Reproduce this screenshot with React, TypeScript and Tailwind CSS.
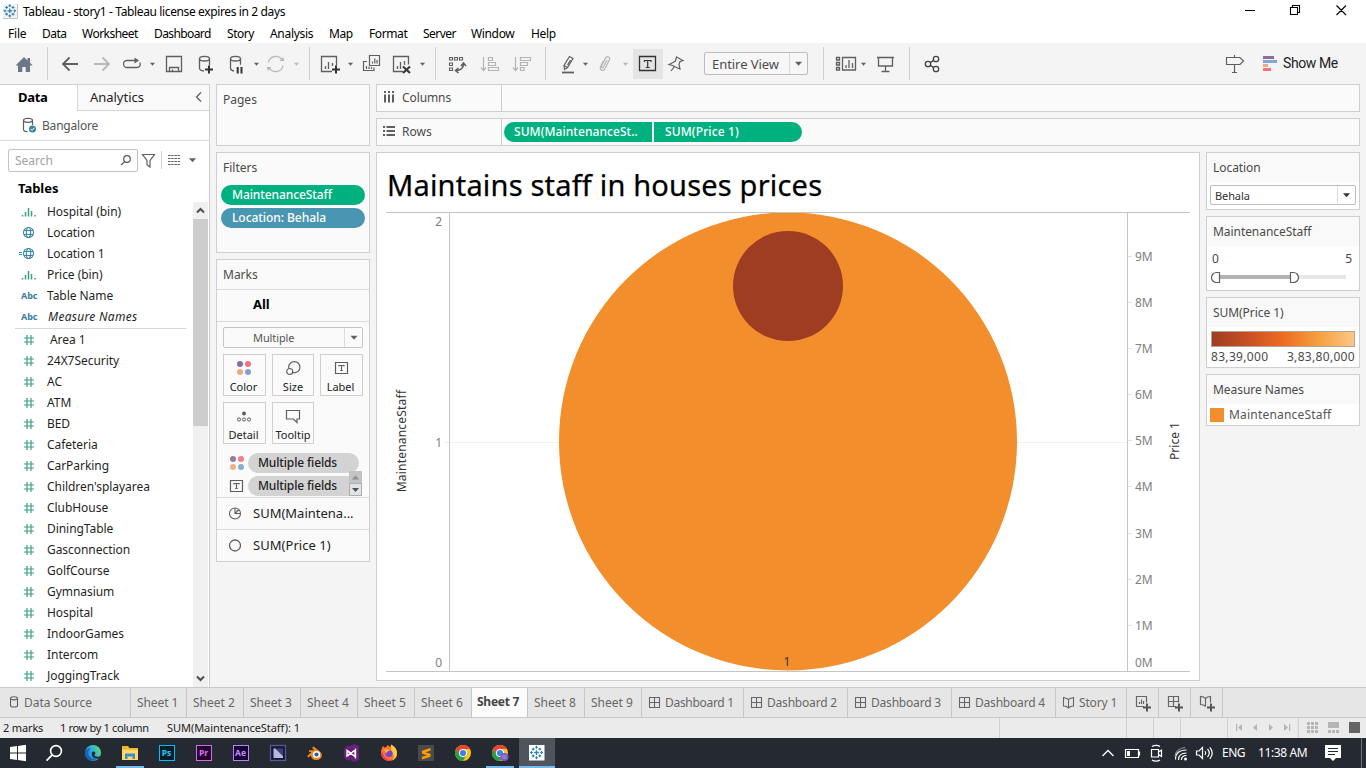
import React from "react";

type IcProps = {
  x: number;
  y?: number;
  w: number;
  h?: number;
  c?: string;
  children?: React.ReactNode;
};

/* Icon whose drawing uses window coordinates; x/y is the corner of its slot. */
function Ic({ x, y = 43, w, h = 41, c = "#5f5f5f", children }: IcProps) {
  return (
    <svg className="block shrink-0" width={w} height={h} viewBox={`${x} ${y} ${w} ${h}`} fill="none" stroke={c} strokeWidth={1.3}>
      {children}
    </svg>
  );
}

function Caret({ x, y, c = "#5f5f5f", s = 2.5 }: { x: number; y: number; c?: string; s?: number }) {
  return <path d={`M${x - s} ${y - s / 2}h${s * 2}l${-s} ${s + 0.5}z`} fill={c} stroke="none" />;
}

function Divider() {
  return <div className="my-1 w-px shrink-0 self-stretch bg-[#d0d0d0]" />;
}

function TableauMark({ cx, cy, s = 1 }: { cx: number; cy: number; s?: number }) {
  return (
    <g transform={`translate(${cx} ${cy}) scale(${s})`} stroke="#2f7fb0" strokeWidth={1.2}>
      <path d="M-2.5 0h5M0 -2.5v5" strokeWidth={1.4} />
      <path d="M-1.5 -5.5h3M0 -7v3M-1.5 5.5h3M0 4v3M-6.8 0h3M-5.3 -1.5v3M3.8 0h3M5.3 -1.5v3" />
      <path d="M-5 -3.6h3M-3.5 -5.1v3M2 -3.6h3M3.5 -5.1v3M-5 3.6h3M-3.5 2.1v3M2 3.6h3M3.5 2.1v3" />
    </g>
  );
}

function TitleBar() {
  return (
    <div className="flex h-6 items-center justify-between bg-white">
      <div className="flex items-center">
        <Ic x={0} y={0} w={22} h={24}>
          <path d="M3 18.500h14.500V4" stroke="#c4c4c4" strokeWidth={1} />
          <rect x="3" y="4" width="14" height="14" fill="#f3f3f3" stroke="none" />
          <TableauMark cx={9.8} cy={10.8} s={0.92} />
        </Ic>
        <span className="ml-px text-[12px] tracking-[-0.37px] text-black">Tableau - story1 - Tableau license expires in 2 days</span>
      </div>
      <Ic x={1230} y={0} w={136} h={24} c="#000">
        <path d="M1245 10.500h10M1290.500 7.500h7v7h-7zM1292.500 7.500v-2h7v7h-2M1336.500 5.500l9.500 9.500M1346 5.500l-9.500 9.500" strokeWidth={1.1} />
      </Ic>
    </div>
  );
}

function MenuBar() {
  return (
    <div className="flex h-[19px] items-center bg-white pl-2 text-[12px] leading-[19px] text-black">
      <span className="w-[34px] tracking-[-0.2px]">File</span>
      <span className="w-10 tracking-[-0.5px]">Data</span>
      <span className="w-[72px] tracking-[-0.52px]">Worksheet</span>
      <span className="w-[73px] tracking-[-0.6px]">Dashboard</span>
      <span className="w-[43px] tracking-[-0.45px]">Story</span>
      <span className="w-[59px] tracking-[-0.3px]">Analysis</span>
      <span className="w-10 tracking-[-0.4px]">Map</span>
      <span className="w-[54px] tracking-[-0.4px]">Format</span>
      <span className="w-12 tracking-[-0.55px]">Server</span>
      <span className="w-[60px] tracking-[-0.35px]">Window</span>
      <span className="tracking-[-0.3px]">Help</span>
    </div>
  );
}

function Toolbar() {
  return (
    <div className="flex h-[41px] shrink-0 items-center bg-[#f4f4f4]">
      <Ic x={0} w={47}>
        <path d="M15.500 65.500L24 57l3.500 3.400V58h2.500v4.800l2.700 2.700H30V72h-4.300v-5h-3.400v5H18v-6.500z" fill="#6b7785" stroke="none" />
      </Ic>
      <Divider />
      <Ic x={48} w={111}>
        <path d="M78 64H63M69.500 57.500L63 64l6.500 6.500" strokeWidth={1.8} />
        <path d="M94 64h15M102.500 57.500L109 64l-6.500 6.500" stroke="#b9b9b9" strokeWidth={1.8} />
        <path d="M131 60.500h-4a3.500 3.500 0 0 0 0 7h10a3.300 3.300 0 0 0 2.800-5M127 60.500h9" />
        <path d="M134.500 57.500l4.500 3-4.500 3z" fill="#5f5f5f" stroke="none" />
        <Caret x={152.500} y={64} />
      </Ic>
      <Ic x={159} w={61}>
        <path d="M166.500 56.500h15v15h-15zM169.500 71.500v-4h9v4M172.500 71v-1.500" />
        <path d="M199.500 58.800v9.500c0 1.500 1.500 2.500 4.500 2.700M209.500 58.800v6.500" />
        <ellipse cx="204.500" cy="58.700" rx="5" ry="2.300" />
        <path d="M209 65.500v8M205 69.500h8" stroke="#333" strokeWidth={2} />
      </Ic>
      <Ic x={220} w={89}>
        <path d="M230.500 58.800v9.500c0 1.500 1 2.300 3.500 2.700M240.500 58.800v6" />
        <ellipse cx="235.500" cy="58.700" rx="5" ry="2.300" />
        <path d="M237.700 67v6.500M241.500 67v6.500" stroke="#333" strokeWidth={2} />
        <Caret x={256.500} y={64} />
        <g stroke="#b9b9b9">
          <path d="M268.500 62.500a7.300 7.300 0 0 1 13.500-2.500M283 65.500a7.300 7.300 0 0 1-13.500 2.500" />
          <path d="M279.500 61h5l-1.500-4zM266.500 67h5l-3.500 4z" fill="#b9b9b9" stroke="none" />
        </g>
        <Caret x={296.500} y={64} c="#b9b9b9" />
      </Ic>
      <Divider />
      <Ic x={310} w={125}>
        <path d="M332 71.500h-10.500v-15h15v9M325.500 69v-3M328.500 69v-7M332.500 66v-3" />
        <path d="M336 65.500v8M332 69.500h8" stroke="#333" strokeWidth={2} />
        <Caret x={350.500} y={64} />
        <path d="M369.500 55.500h10v10h-10zM372.500 63.500v-2M374.800 63.500v-5M377 63.500v-3.500" strokeWidth={1.2} />
        <path d="M367 61.500h-3.500v9h10.500v-3M366.500 69v-3M369 69v-2.500M371.500 69v-2" strokeWidth={1.2} />
        <path d="M403 71.500h-9.500v-15h15v8M397.500 69v-3M400.500 69v-7M404.500 65v-4" />
        <path d="M403 66.500l7 6.500M410 66.500l-7 6.500" stroke="#333" strokeWidth={2} />
        <Caret x={422.500} y={64} />
      </Ic>
      <Divider />
      <Ic x={436} w={109}>
        <path d="M449.500 57.500h3v2.500h-3zM454.500 57.500h3v2.500h-3zM459.500 57.500h3v2.500h-3zM449.500 63h3v2.500h-3zM449.500 68h3v2.500h-3z" strokeWidth={1.1} />
        <path d="M463.500 64c0 4-3 6.500-7 6.500M461 66l2.500-3 2.500 3M458.500 68l-3 2.500 3 2.500" strokeWidth={1.6} />
        <g stroke="#b4b4b4" strokeWidth={1.200}>
          <path d="M483.500 57v13M481 67.500l2.500 3 2.500-3M488.500 57.500h4v3h-4zM488.500 62.500h7v3h-7zM488.500 67.500h10v3h-10z" />
          <path d="M515.500 57v13M513 67.500l2.500 3 2.500-3M520.500 57.500h10v3h-10zM520.500 62.500h7v3h-7zM520.500 67.500h3.500v3h-3.500z" />
        </g>
      </Ic>
      <Divider />
      <Ic x={546} w={87}>
        <path d="M564.500 69.500l-.5-4 5.500-9 3.500 2-5.500 9zM564 65.500l3.500 2M570.500 60l-3 5" strokeWidth={1.200} />
        <path d="M562 72.500h12" strokeWidth={1.800} />
        <Caret x={585.500} y={64} />
        <path d="M607 60l-3.500 7c-.9 1.600-2.600.8-2-.8l4-8.200c1.200-2.200 5-.8 4 1.600l-4.500 9.200c-1.500 3-6 1.300-4.500-2l3-6" stroke="#b4b4b4" strokeWidth={1.200} />
        <Caret x={625.500} y={64} c="#b4b4b4" />
      </Ic>
      <div className="h-[30px] bg-[#e4e4e4]">
        <Ic x={633} y={49} w={30} h={30} c="#333">
          <path d="M639.500 56.500h16v14h-16z" />
          <path d="M644.500 62v-1.500h6.500v1.500M647.700 60.500v7M645.700 67.500h4" strokeWidth={1.200} />
        </Ic>
      </div>
      <Ic x={663} w={41}>
        <path d="M676.500 57l6.500 3.500-3 1-1 3 1 4.500-3.500-1.500-4-2-3.500-1 4-2 2.500-1.500zM674.500 66.500l-3.500 4.500" strokeWidth={1.200} />
      </Ic>
      <div className="flex h-[23px] w-[104px] items-center rounded-[2px] border border-[#bcbcbc] bg-[#f7f7f7]">
        <span className="flex-1 pl-[7px] text-[13px] leading-5 tracking-[-0.05px] text-[#4c4c4c]">Entire View</span>
        <div className="h-[21px] border-l border-[#d8d8d8]">
          <Ic x={790} y={53} w={17} h={21}>
            <Caret x={798.500} y={63.500} s={3.5} />
          </Ic>
        </div>
      </div>
      <div className="w-[15px]" />
      <Divider />
      <Ic x={824} w={85}>
        <path d="M836.500 57.500h3v2.500h-3zM836.500 62.500h3v2.500h-3zM836.500 67.500h3v2.500h-3zM842.500 57.500h13v12.500h-13zM846 68v-3M849 68v-8M852.500 68v-5" />
        <Caret x={863.500} y={64} />
        <path d="M877 57.500h17M878.500 57.500v8.500h14v-8.500M885.500 66v5M881.500 71.500h8" />
      </Ic>
      <Divider />
      <Ic x={910} w={310} c="#444">
        <circle cx="928" cy="64" r="2.700" />
        <circle cx="936" cy="59" r="2.700" />
        <circle cx="936" cy="69" r="2.700" />
        <path d="M930.300 62.600l3.400-2.200M930.300 65.400l3.400 2.200" />
      </Ic>
      <Ic x={1220} w={62}>
        <path d="M1226.500 57.500h13.500l3.500 3.500-3.500 3.500h-13.500zM1234.500 55v2.500M1234.500 64.500v8M1232 72.500h5" strokeWidth={1.200} />
        <g stroke="none">
          <rect x="1263" y="56" width="11" height="3" fill="#876f99" />
          <rect x="1263" y="60" width="14" height="3" fill="#84a5cd" />
          <rect x="1263" y="64" width="5" height="3" fill="#f1a77c" />
          <rect x="1263" y="68" width="8" height="3" fill="#fa6e7c" />
        </g>
      </Ic>
      <span className="ml-px font-[Roboto] text-[14px] tracking-[-0.4px] text-[#222]">Show Me</span>
    </div>
  );
}

type FieldKind = "bin" | "geo" | "geo=" | "abc" | "num";

function FieldIcon({ kind }: { kind: FieldKind }) {
  if (kind === "abc") {
    return <span className="w-[30px] pl-[3px] text-[9px] font-bold tracking-[-0.1px] text-[#3a7ca0]">Abc</span>;
  }
  return (
    <Ic x={0} y={0} w={30} h={21} c={kind === "num" || kind === "bin" ? "#3f9e80" : "#3a87a5"}>
      {kind === "num" && <path d="M9 6v10M13 6v10M6 9h10M6 13h10" strokeWidth={1.200} />}
      {kind === "bin" && <path d="M4.500 14v1.500M7.500 11v4.500M10.500 7v8.500M13.500 10v5.500M17 14v1.500" strokeWidth={1.500} />}
      {(kind === "geo" || kind === "geo=") && (
        <g strokeWidth={1.100}>
          <circle cx="10.500" cy="10.500" r="5" />
          <ellipse cx="10.500" cy="10.500" rx="2.200" ry="5" />
          <path d="M6 8.500h9M6 12.500h9" />
          {kind === "geo=" && <path d="M1 9.500h3M1 11.500h3" />}
        </g>
      )}
    </Ic>
  );
}

function Field({ kind, name, italic, indent }: { kind: FieldKind; name: string; italic?: boolean; indent?: boolean }) {
  return (
    <div className="flex h-[21px] items-center pl-[18px] text-[12px] leading-[21px] text-[#1f1f1f]">
      <FieldIcon kind={kind} />
      <span className={italic ? "italic tracking-[0.3px]" : indent ? "ml-[2px] tracking-[-0.05px]" : "-ml-px tracking-[-0.05px]"}>{name}</span>
    </div>
  );
}

const measures = [
  "24X7Security", "AC", "ATM", "BED", "Cafeteria", "CarParking", "Children'splayarea", "ClubHouse", "DiningTable",
  "Gasconnection", "GolfCourse", "Gymnasium", "Hospital", "IndoorGames", "Intercom", "JoggingTrack",
];

function DataPane() {
  return (
    <div className="flex w-[210px] shrink-0 flex-col border-t border-r border-[#cfcfcf] bg-white">
      <div className="flex h-[26px] shrink-0">
        <div className="w-[77px] pl-[18px] text-[13px] leading-[25px] font-bold tracking-[-0.3px] text-black">Data</div>
        <div className="flex flex-1 justify-between border-b border-l border-[#d4d4d4] bg-[#f9f9f9] pl-3">
          <span className="text-[13px] leading-[25px] tracking-[-0.03px] text-[#222]">Analytics</span>
          <Ic x={190} y={85} w={19} h={25}>
            <path d="M201 92.500l-4.500 4.500 4.500 4.500" strokeWidth={1.300} />
          </Ic>
        </div>
      </div>
      <div className="flex h-[30px] shrink-0 items-center border-b border-[#dcdcdc]">
        <Ic x={0} y={111} w={42} h={29}>
          <path d="M23.500 120.500v9c0 1.200 1.500 2 4 2.200M32.500 120.500v4.500" strokeWidth={1.200} />
          <ellipse cx="28" cy="120.300" rx="4.500" ry="2" strokeWidth={1.200} />
          <circle cx="32.500" cy="129" r="3.500" fill="#3a87a5" stroke="none" />
          <path d="M30.800 129l1.300 1.300 2.200-2.500" stroke="#fff" strokeWidth={1} />
        </Ic>
        <span className="text-[12px] leading-[28px] tracking-[-0.2px] text-[#555]">Bangalore</span>
      </div>
      <div className="flex h-[39px] shrink-0 items-center pl-2">
        <div className="flex h-[23px] w-[130px] items-center justify-between rounded-[2px] border border-[#c4c4c4]">
          <span className="pl-1.5 text-[12px] text-[#a2a2a2]">Search</span>
          <Ic x={117} y={150} w={20} h={21} c="#555">
            <circle cx="127" cy="159" r="3.300" strokeWidth={1.200} />
            <path d="M124.600 161.600l-3.500 3.500" />
          </Ic>
        </div>
        <Ic x={138} y={141} w={71} h={39}>
          <path d="M142.500 154.500h12l-4.500 6v6.500l-3-2.200v-4.300z" strokeWidth={1.200} />
          <path d="M161.500 151v18" stroke="#d0d0d0" strokeWidth={1} />
          <path d="M168 155.500h12M168 158.500h12M168 161.500h12M168 164.500h12" strokeDasharray="2.500 0.700" strokeWidth={1.200} />
          <Caret x={192.500} y={160} s={3.5} />
        </Ic>
      </div>
      <div className="h-[21px] shrink-0 pl-[18px] text-[13px] leading-[16px] font-bold tracking-[-0.03px] text-black">Tables</div>
      <div className="flex min-h-0 flex-1 overflow-hidden">
        <div className="w-[193px] overflow-hidden">
          <Field kind="bin" name="Hospital (bin)" />
          <Field kind="geo" name="Location" />
          <Field kind="geo=" name="Location 1" />
          <Field kind="bin" name="Price (bin)" />
          <Field kind="abc" name="Table Name" />
          <Field kind="abc" name="Measure Names" italic />
          <div className="mt-px mr-[7px] ml-[15px] h-px bg-[#d6d6d6]" />
          <Field kind="num" name="Area 1" indent />
          {measures.map((m) => (
            <Field key={m} kind="num" name={m} />
          ))}
        </div>
        <div className="mt-px flex w-[15px] flex-col bg-[#f0f0f0]">
          <Ic x={0} y={0} w={15} h={17} c="#4d4d4d">
            <path d="M4 10.500l3.500-3.500 3.500 3.500" strokeWidth={2} />
          </Ic>
          <div className="h-[207px] bg-[#cdcdcd]" />
          <div className="flex-1" />
          <Ic x={0} y={0} w={15} h={17} c="#4d4d4d">
            <path d="M4 6.500l3.500 3.500 3.500-3.500" strokeWidth={2} />
          </Ic>
        </div>
      </div>
    </div>
  );
}

function ColorDots({ small }: { small?: boolean }) {
  return (
    <svg width="16" height="16" viewBox="0 0 16 16" className={small ? "opacity-90" : ""}>
      <circle cx="4" cy="4" r="3" fill="#876f99" />
      <circle cx="12" cy="4" r="3" fill="#fa6e7c" />
      <circle cx="4" cy="12" r="3" fill="#f1a77c" />
      <circle cx="12" cy="12" r="3" fill="#7fa3cd" />
    </svg>
  );
}

function LabelIcon() {
  return (
    <svg width="16" height="16" viewBox="0 0 16 16" fill="none" stroke="#5f5f5f" strokeWidth={1.200}>
      <path d="M2.500 2.500h12v11h-12zM6 6.500v-1h5v1M8.500 5.500v5M7.200 10.500h2.600" />
    </svg>
  );
}

function MarkButton({ label, shift, children }: { label: string; shift?: boolean; children: React.ReactNode }) {
  return (
    <div className={`flex h-[42px] flex-col items-center border border-[#cfcfcf] bg-[#fbfbfb] pt-[5px] ${shift ? "pr-0.5" : ""}`}>
      <div className="h-4">{children}</div>
      <span className="mt-[3px] text-[11px] leading-[15px] whitespace-nowrap text-[#222]">{label}</span>
    </div>
  );
}

function Shelves() {
  return (
    <div className="ml-1.5 flex w-[154px] shrink-0 flex-col gap-1.5 text-[12px]">
      <div className="h-[62px] border border-[#cfcfcf] bg-[#fafafa] pt-[6px] pl-1.5 leading-[18px] text-[#4a4a4a]">Pages</div>
      <div className="h-[101px] border border-[#cfcfcf] bg-[#fafafa] px-1">
        <div className="pt-[6px] pl-0.5 leading-[18px] text-[#4a4a4a]">Filters</div>
        <div className="mt-2 h-5 rounded-full bg-[#00b180] pl-[11px] leading-5 font-medium text-white tracking-[-0.1px]">MaintenanceStaff</div>
        <div className="mt-[3px] h-5 rounded-full bg-[#4996b2] pl-[11px] leading-5 font-medium text-white tracking-[-0.05px]">Location: Behala</div>
      </div>
      <div className="h-[303px] border border-[#cfcfcf] bg-[#fafafa]">
        <div className="h-[29px] pl-1.5 leading-[29px] text-[#4a4a4a]">Marks</div>
        <div className="h-[33px] border-y border-[#dadada] pl-9 text-[13px] leading-[29px] font-bold text-black">All</div>
        <div className="h-[175px] px-1.5 pt-[5px]">
          <div className="flex h-[21px] rounded-[2px] border border-[#c6c6c6]">
            <div className="flex-1 pl-[29px] text-[11px] leading-[20px] tracking-[-0.1px] text-[#555]">Multiple</div>
            <div className="border-l border-[#dcdcdc]">
              <Ic x={0} y={0} w={17} h={19}>
                <Caret x={9} y={9.5} s={3.5} />
              </Ic>
            </div>
          </div>
          <div className="mt-1.5 grid grid-cols-[43px_42px_43px] gap-1.5">
            <MarkButton label="Color" shift>
              <ColorDots />
            </MarkButton>
            <MarkButton label="Size">
              <svg width="16" height="16" viewBox="0 0 16 16" fill="none" stroke="#5f5f5f" strokeWidth={1.200}>
                <circle cx="9.300" cy="7.200" r="5.600" />
                <circle cx="4.700" cy="11.500" r="3" fill="#fbfbfb" />
              </svg>
            </MarkButton>
            <MarkButton label="Label" shift>
              <LabelIcon />
            </MarkButton>
            <MarkButton label="Detail" shift>
              <svg width="16" height="16" viewBox="0 0 16 16" fill="none" stroke="#5f5f5f">
                <circle cx="8" cy="5.500" r="2" fill="#5f5f5f" stroke="none" />
                <circle cx="3" cy="11.500" r="1.600" />
                <circle cx="8" cy="11.500" r="1.600" />
                <circle cx="13" cy="11.500" r="1.600" />
              </svg>
            </MarkButton>
            <MarkButton label="Tooltip">
              <svg width="16" height="16" viewBox="0 0 16 16" fill="none" stroke="#5f5f5f" strokeWidth={1.200}>
                <path d="M1.500 2.500h13v8.500h-2.500v3.500l-3.500-3.500h-7z" />
              </svg>
            </MarkButton>
          </div>
          <div className="mt-[9px] flex h-5 items-center pl-1.5 font-medium text-[#222]">
            <ColorDots small />
            <div className="ml-[3px] h-5 w-[111px] rounded-full bg-[#d3d3d3] pl-2.5 leading-5 tracking-[-0.15px]">Multiple fields</div>
          </div>
          <div className="relative mt-[3px] flex h-5 items-center pl-[5px] font-medium text-[#222]">
            <LabelIcon />
            <div className="ml-1 h-5 w-[102px] rounded-l-full bg-[#d3d3d3] pl-2.5 leading-5 tracking-[-0.15px]">Multiple fields</div>
            <div className="absolute -top-[5px] right-px">
              <Ic x={0} y={0} w={13} h={25}>
                <rect x="0" y="0" width="13" height="12" fill="#c3c3c3" stroke="none" />
                <rect x="0.5" y="12.500" width="12" height="12" fill="#e3e3e3" stroke="#adadad" strokeWidth={1} />
                <path d="M3 8.500h7l-3.500-4z" fill="#8d8d8d" stroke="none" />
                <path d="M3 17h7l-3.500 4z" fill="#435468" stroke="none" />
              </Ic>
            </div>
          </div>
        </div>
        <div className="flex h-8 items-center border-t border-[#dadada]">
          <Ic x={0} y={0} w={36} h={31}>
            <circle cx="18" cy="15.500" r="5.500" strokeWidth={1.100} />
            <path d="M18 10v5.500h5.500M18 15.500l3.800-4" strokeWidth={1.100} />
          </Ic>
          <span className="text-[13px] text-[#222]">SUM(Maintena...</span>
        </div>
        <div className="flex h-8 items-center border-t border-[#dadada]">
          <Ic x={0} y={0} w={36} h={31}>
            <circle cx="18" cy="15.500" r="5.500" strokeWidth={1.300} />
          </Ic>
          <span className="text-[13px] tracking-[0.05px] text-[#222]">SUM(Price 1)</span>
        </div>
      </div>
    </div>
  );
}

const priceTicks: [string, number][] = [
  ["9M", 257], ["8M", 303], ["7M", 349], ["6M", 395], ["5M", 441], ["4M", 487], ["3M", 534], ["2M", 580], ["1M", 626], ["0M", 663],
];

function Chart() {
  return (
    <svg className="block" width="822" height="473" viewBox="377 207 822 473">
      <path d="M450 442.500H1127" stroke="#f0f0f0" />
      <circle cx="788" cy="441.500" r="229" fill="#f28e2b" />
      <circle cx="788" cy="286" r="55" fill="#9e3d22" />
      <path d="M386 212.500H1190M386 671.500H1190M449.500 212V671M1127.500 212V671" stroke="#c4c4c4" />
      <path d="M445 442.500h4" stroke="#ececec" />
      <g fill="#808080" fontSize="12">
        <text x="442" y="226" textAnchor="end">2</text>
        <text x="442" y="447" textAnchor="end">1</text>
        <text x="442" y="667" textAnchor="end">0</text>
        {priceTicks.map(([t, y]) => (
          <g key={t}>
            {y < 660 && <path d={`M1128 ${y - 0.5}h4`} stroke="#e4e4e4" />}
            <text x="1135" y={y + 4}>{t}</text>
          </g>
        ))}
      </g>
      <g fill="#333" fontSize="12">
        <text transform="translate(406 441) rotate(-90)" textAnchor="middle" letterSpacing="0.2">MaintenanceStaff</text>
        <text transform="translate(1179 441) rotate(-90)" textAnchor="middle" letterSpacing="0">Price 1</text>
        <text x="787" y="666" textAnchor="middle">1</text>
      </g>
    </svg>
  );
}

function Card({ title, className, children }: { title: string; className: string; children: React.ReactNode }) {
  return (
    <div className={`border border-[#cfcfcf] bg-white ${className}`}>
      <div className="h-[29px] bg-[#f9f9f9] pl-1.5 text-[12px] leading-[29px] tracking-[-0.06px] text-[#4a4a4a]">{title}</div>
      {children}
    </div>
  );
}

function Legends() {
  return (
    <div className="flex w-[154px] shrink-0 flex-col gap-1.5">
      <Card title="Location" className="h-[58px]">
        <div className="mx-[3px] mt-[3px] flex h-5 rounded-[2px] border border-[#bdbdbd]">
          <span className="flex-1 pl-1 text-[11px] leading-[19px] tracking-[-0.1px] text-[#333]">Behala</span>
          <div className="border-l border-[#dcdcdc]">
            <Ic x={0} y={0} w={17} h={18} c="#333">
              <Caret x={8.500} y={9} s={3.500} c="#333" />
            </Ic>
          </div>
        </div>
      </Card>
      <Card title="MaintenanceStaff" className="h-[75px]">
        <div className="flex justify-between pt-[5px] pr-[7px] pl-[5px] text-[12px] leading-4 text-[#4a4a4a]">
          <span>0</span>
          <span>5</span>
        </div>
        <Ic x={1207} y={267} w={152} h={22}>
          <rect x="1220" y="275" width="126" height="4" fill="#e6e6e6" stroke="none" />
          <rect x="1219" y="275" width="72" height="4" fill="#b3b3b3" stroke="none" />
          <path d="M1219.500 272.500v10h-3a5 5 0 0 1 0-10zM1290.500 272.500v10h3a5 5 0 0 0 0-10z" fill="#fff" strokeWidth={1.200} />
        </Ic>
      </Card>
      <Card title="SUM(Price 1)" className="h-[71px]">
        <div className="mx-1 mt-1 h-4 border border-[#b0a695] bg-[linear-gradient(90deg,#9e3d22,#c85024_25%,#ed6a20_49%,#f5a03f_75%,#ffc685)]" />
        <div className="flex justify-between px-1 pt-px text-[12px] leading-[17px] tracking-[0.32px] text-[#4a4a4a]">
          <span>83,39,000</span>
          <span>3,83,80,000</span>
        </div>
      </Card>
      <Card title="Measure Names" className="h-[52px]">
        <div className="flex h-[21px] items-center pl-[3px]">
          <div className="size-3.5 bg-[#f28e2b]" />
          <span className="ml-[5px] text-[12px] tracking-[0.2px] text-[#555]">MaintenanceStaff</span>
        </div>
      </Card>
    </div>
  );
}

function Workspace() {
  return (
    <div className="ml-1.5 flex w-[984px] shrink-0 flex-col gap-1.5">
      <div className="flex h-7 shrink-0 border border-[#cfcfcf] bg-[#fafafa]">
        <div className="flex w-[125px] border-r border-[#cfcfcf]">
          <Ic x={377} y={85} w={25} h={26}>
            <path d="M385 91v2M389 91v2M393 91v2M385 94.500v8M389 94.500v8M393 94.500v8" strokeWidth={2} />
          </Ic>
          <span className="text-[12px] leading-[26px] tracking-[-0.1px] text-[#4a4a4a]">Columns</span>
        </div>
      </div>
      <div className="flex h-7 shrink-0 items-center border border-[#cfcfcf] bg-[#fafafa] text-[12px]">
        <div className="flex h-full w-[125px] border-r border-[#cfcfcf]">
          <Ic x={377} y={119} w={25} h={26}>
            <path d="M383 127h2M383 131h2M383 135h2M386.500 127h8.500M386.500 131h8.500M386.500 135h8.500" strokeWidth={2} />
          </Ic>
          <span className="leading-[26px] text-[#4a4a4a]">Rows</span>
        </div>
        <div className="ml-0.5 flex gap-0.5 leading-5 font-medium text-white">
          <div className="h-5 w-[148px] rounded-l-full bg-[#00b180] pl-2.5 tracking-[0.06px]">SUM(MaintenanceSt..</div>
          <div className="h-5 w-[148px] rounded-r-full bg-[#00b180] pl-[11px] tracking-[0.12px]">SUM(Price 1)</div>
        </div>
      </div>
      <div className="flex gap-1.5">
        <div className="h-[529px] w-[824px] border border-[#cfcfcf] bg-white">
          <div className="h-[54px] pl-2.5 text-[29px] leading-[63px] tracking-[0.19px] whitespace-nowrap text-black [-webkit-text-stroke:0.25px_#000]">
            Maintains staff in houses prices
          </div>
          <Chart />
        </div>
        <Legends />
      </div>
    </div>
  );
}

const gridPath = "M2.500 1.500h10v10h-10zM7.500 1.500v10M2.500 6.500h10";
const bookPath = "M2.500 1.500l3 1 2 .8 2-.8 3-1v8.500l-3 .5-2 1.500-2-1.500-3-.5zM7.500 3.500v8";

function TabIcon({ d }: { d: string }) {
  return (
    <svg width="15" height="14" viewBox="0 0 15 14" fill="none" stroke="#666" strokeWidth={1.100}>
      <path d={d} />
    </svg>
  );
}

function NewTab({ kind }: { kind: "sheet" | "dash" | "story" }) {
  return (
    <div className="h-[29px] w-8 border-r border-[#c6c6c6]">
      <svg width="31" height="29" viewBox="0 0 31 29" fill="none" stroke="#666" strokeWidth={1.200}>
        {kind === "sheet" && <path d="M17 18.500h-7.500v-10h10v6M12.500 16v-2M14.500 16v-4.500M16.500 16v-3" />}
        {kind === "dash" && <path d="M17 18.500h-7.500v-10h10v6M14.500 8.500v10M9.500 13.500h10" />}
        {kind === "story" && <path d="M14.500 18.500l-2-1.500-3-.5v-8l3 .5 2 1.500 2-1.500 3-.5v6M14.500 10.500v8" />}
        <path d="M20 15.500v8M16 19.500h8" stroke="#555" strokeWidth={2} />
      </svg>
    </div>
  );
}

function SheetTabs() {
  const tab = "flex h-[29px] items-center border-r border-[#c6c6c6] pl-1.5";
  return (
    <div className="flex h-[31px] shrink-0 border-y border-[#c9c9c9] bg-[#e6e6e6] text-[12px] text-[#666]">
      <div className="flex h-[29px] w-[131px] items-center border-r border-[#c6c6c6]">
        <Ic x={0} y={688} w={24} h={29}>
          <path d="M10.500 698.500v7c0 2 7 2 7 0v-7" strokeWidth={1.100} />
          <ellipse cx="14" cy="698.300" rx="3.500" ry="1.600" strokeWidth={1.100} />
        </Ic>
        <span className="tracking-[-0.02px]">Data Source</span>
      </div>
      <div className={`${tab} w-14 tracking-[-0.1px]`}>Sheet 1</div>
      {["Sheet 2", "Sheet 3", "Sheet 4", "Sheet 5", "Sheet 6"].map((s) => (
        <div key={s} className={`${tab} w-[57px]`}>{s}</div>
      ))}
      <div className="h-[29px] w-14 border-r border-[#c6c6c6] bg-[#fcfcfc] pl-[5px] leading-[27px] font-bold tracking-[-0.25px] text-[#444]">Sheet 7</div>
      <div className={`${tab} w-[57px]`}>Sheet 8</div>
      <div className={`${tab} w-[57px]`}>Sheet 9</div>
      {[1, 2, 3, 4].map((n) => (
        <div key={n} className={`flex h-[29px] items-center border-r border-[#c6c6c6] pl-[5px] ${n === 1 ? "w-[102px] gap-[3px] tracking-[-0.3px]" : "w-[104px] gap-[3px] tracking-[-0.2px]"}`}>
          <TabIcon d={gridPath} />
          <span>Dashboard {n}</span>
        </div>
      ))}
      <div className="flex h-[29px] w-[71px] items-center gap-[3px] border-r border-[#c6c6c6] pl-[5px] tracking-[-0.15px]">
        <TabIcon d={bookPath} />
        <span>Story 1</span>
      </div>
      <NewTab kind="sheet" />
      <NewTab kind="dash" />
      <NewTab kind="story" />
    </div>
  );
}

function StatusBar() {
  return (
    <div className="flex h-5 shrink-0 bg-[#ebebeb] text-[11px] leading-5 text-[#222]">
      <span className="w-[60px] pl-[3px] tracking-[-0.15px]">2 marks</span>
      <span className="w-[107px] tracking-[-0.33px]">1 row by 1 column</span>
      <span className="tracking-[-0.05px]">SUM(MaintenanceStaff): 1</span>
      <div className="flex-1" />
      <Ic x={990} y={718} w={376} h={20}>
        <path d="M999.500 718v20M1126.500 718v20M1153.500 718v20M1180.500 718v20M1227.500 718v20M1298.500 718v20" stroke="#cfcfcf" strokeWidth={1} />
        <g fill="#b5b5b5" stroke="none">
          <path d="M1236 724h1.200v7h-1.200zM1242 724v7l-4-3.500zM1257 724v7l-4-3.500zM1269 724v7l4-3.500zM1284 724v7l4-3.500zM1289 724h1.200v7h-1.200z" />
          <path d="M1307 722h3v3h-3zM1311 722h3v3h-3zM1315 722h3v3h-3zM1307 726h3v3h-3zM1311 726h3v3h-3zM1315 726h3v3h-3zM1307 730h3v3h-3zM1311 730h3v3h-3zM1315 730h3v3h-3z" />
          <path d="M1328 722h11v6h-11zM1328 730h3v3h-3zM1332 730h3v3h-3zM1336 730h3v3h-3z" />
        </g>
        <rect x="1349" y="722" width="11" height="11" fill="#646464" stroke="none" />
      </Ic>
    </div>
  );
}

function AdobeTile({ name, className }: { name: string; className: string }) {
  return (
    <div className="flex w-[37px] items-center justify-center">
      <div className={`flex size-4 items-center justify-center border text-[8.5px] leading-none font-bold ${className}`}>{name}</div>
    </div>
  );
}

function Chrome({ cx }: { cx: number }) {
  return (
    <g stroke="none" transform={`translate(${cx} 753)`}>
      <circle r="8" fill="#fbc116" />
      <path d="M-6.930 -4A8 8 0 0 1 6.930 -4H0L-3.400 2z" fill="#ea4335" />
      <path d="M-6.930 -4A8 8 0 0 0 0 8L3.460 2H-3.460z" fill="#2c9c48" />
      <circle r="4" fill="#fff" />
      <circle r="3.100" fill="#3b82ec" />
    </g>
  );
}

function Taskbar() {
  return (
    <div className="flex h-[30px] shrink-0 bg-[#252932]">
      <Ic x={0} y={738} w={36} h={30}>
        <path d="M10 747l7-1v6.500h-7zM18 745.900l8-1.100v7.700h-8zM10 753.500h7v6.500l-7-1zM18 753.500h8v7.700l-8-1.100z" fill="#fff" stroke="none" />
      </Ic>
      <Ic x={36} y={738} w={38} h={30} c="#fff">
        <circle cx="56" cy="751" r="5.400" strokeWidth={1.600} />
        <path d="M52 755.200l-5.500 5.500" strokeWidth={1.800} />
      </Ic>
      <Ic x={74} y={738} w={37} h={30}>
        <defs>
          <linearGradient id="edge" x1="0" y1="0.7" x2="1" y2="0.2">
            <stop offset="0" stopColor="#1b7fd0" />
            <stop offset="0.5" stopColor="#2cb0dc" />
            <stop offset="1" stopColor="#6bdc62" />
          </linearGradient>
        </defs>
        <circle cx="93" cy="753" r="8" fill="url(#edge)" stroke="none" />
        <path d="M85 753c0-3 3-5 6-4.500-2 1-3 3-2.500 5.500.5 3.500 4 5.500 8 5.200-5 3.500-11.500.300-11.500-6.200z" fill="#1763b8" stroke="none" />
        <path d="M92 752.500c.5-1.500 3-1.500 3.300.3.200 1.200-1 1.700-.8 2.700.5 1.500 4.500 1.500 6 .5v1.800c-2.500 1.800-7.500 1.200-8.500-2-.4-1.200-.3-2.300 0-3.300z" fill="#252932" stroke="none" />
      </Ic>
      <Ic x={111} y={738} w={37} h={30}>
        <g stroke="none">
          <path d="M122 746h6l1.500 2h8.500v12h-16z" fill="#f0b429" />
          <path d="M122 749.500h16V760h-16z" fill="#ffd868" />
          <path d="M125 753.500h10v5.500h-2.500v-2.500h-5v2.500H125z" fill="#3a8dd0" />
          <rect x="116" y="766" width="28" height="2" fill="#76b9ed" />
        </g>
      </Ic>
      <AdobeTile name="Ps" className="border-[#00c0f0] bg-[#001d2b] text-[#20c8f5]" />
      <AdobeTile name="Pr" className="border-[#d767e8] bg-[#24002f] text-[#dc70ef]" />
      <AdobeTile name="Ae" className="border-[#b386f0] bg-[#1a0038] text-[#bd94f5]" />
      <Ic x={259} y={738} w={37} h={30}>
        <rect x="270.500" y="745.500" width="15" height="15" fill="#171743" stroke="#575b8c" />
        <path d="M273.500 748.500h2l7.500 7.500v2h-9.500z" fill="#b4bada" stroke="none" />
        <path d="M275.500 748.500h7.500v7.500z" fill="#3d4278" stroke="none" />
      </Ic>
      <Ic x={296} y={738} w={37} h={30}>
        <g stroke="none">
          <path d="M309 750.200h5.500l-2.500-2.300 1.500-1.400 6.500 5c3.500 3 2 8.500-3.500 8.500-3.500 0-5.500-2-5.500-4.500l-2.500 2-1.300-1.400 4.300-4.200h-2.500z" fill="#f08a20" />
          <circle cx="316.500" cy="754.500" r="3.600" fill="#fff" />
          <circle cx="316.500" cy="754.500" r="2.100" fill="#27609b" />
        </g>
      </Ic>
      <Ic x={333} y={738} w={37} h={30}>
        <path d="M344 749l3-3.500 3 .5 4-2 5 2v14l-5 2-4-2-3 .5-3-3.500z" fill="#68217a" stroke="none" />
        <path d="M347 750.500v5.500l3-2.700zM347.500 750.500l7.500 6v-6.500l-7.500 6M355.500 748.500v10" stroke="#fff" strokeWidth={1.400} />
      </Ic>
      <Ic x={370} y={738} w={37} h={30}>
        <g stroke="none">
          <path d="M382 748l1-2 1.500 1.500c1 0 2-.5 3-2.500 1 1 2 1 2.500 2 1-1 1-2 1-2.500 4 2 6 5 6 8.500a8 8 0 0 1-16 0c0-2 .3-3.500 1-5z" fill="#ff7139" />
          <path d="M391 744.500c4 2 6 5 6 8.500a8 8 0 0 1-5 7.500c3-3 2-6-1-9.500z" fill="#ffca38" />
          <path d="M382 751a7.500 7.500 0 0 0 11 8.500c-4 2-10-1-11-8.500z" fill="#f5285c" />
          <circle cx="389" cy="753.500" r="3.600" fill="#7844cc" />
          <path d="M384.500 749c3 0 5 .5 5.500 2-2 0-3 .5-3.500 2.500-1-1-2-2.500-2-4.500z" fill="#ffaf36" />
        </g>
      </Ic>
      <Ic x={407} y={738} w={37} h={30}>
        <rect x="418" y="745" width="16" height="16" fill="#4a4a4a" stroke="none" />
        <path d="M430.500 748l-8.500 2.700v3l5 1.500-5 1.500v2.800l8.500-2.700v-3l-5-1.500 5-1.500z" fill="#ff9a00" stroke="none" />
      </Ic>
      <Ic x={444} y={738} w={37} h={30}>
        <Chrome cx={463} />
      </Ic>
      <Ic x={481} y={738} w={38} h={30}>
        <Chrome cx={500} />
        <circle cx="504.500" cy="757" r="4" fill="#7e57c2" stroke="none" />
        <path d="M502.500 756h4M502.500 758h4" stroke="#bca8e6" strokeWidth={0.800} />
        <rect x="486" y="766" width="28" height="2" fill="#76b9ed" stroke="none" />
      </Ic>
      <div className="bg-[#50545d]">
        <Ic x={519} y={738} w={36} h={30}>
          <rect x="529" y="745" width="15.500" height="15.500" fill="#fff" stroke="none" />
          <TableauMark cx={536.500} cy={752.500} s={0.95} />
          <rect x="519" y="766" width="36" height="2" fill="#76b9ed" stroke="none" />
        </Ic>
      </div>
      <div className="flex-1" />
      <Ic x={1095} y={738} w={126} h={30} c="#fff">
        <path d="M1102.500 756l5.500-5.500 5.500 5.500" strokeWidth={1.300} />
        <path d="M1125.500 749.500h13v8h-13zM1139.500 751.500v4" strokeWidth={1.200} />
        <rect x="1127" y="751" width="3" height="5" fill="#fff" stroke="none" />
        <path d="M1151.500 749.500h7v7.500h-7zM1158.500 752l3-2v6.500l-3-2M1152 746.500c2-1.500 6-1.500 8 0M1152 760c2 1.500 6 1.500 8 0" strokeWidth={1.200} />
        <g strokeWidth={1.200}>
          <path d="M1178.500 760c0-4.500 2.500-7 8-7M1181.500 760c0-2.800 1.700-4.500 5-4.500" />
          <path d="M1175.500 759.500c0-6 4-9.500 11-9.500" />
          <path d="M1175 756.500c.5-5 4.500-8.500 10-9" stroke="#9a9a9a" />
        </g>
        <circle cx="1185.500" cy="759" r="1.500" fill="#fff" stroke="none" />
        <path d="M1196.500 751h2.500l3.500-3.500v11l-3.500-3.500h-2.500zM1205 751c1 1.300 1 2.700 0 4M1207.500 749c2.200 2.500 2.200 5.500 0 8M1209.800 747.300c3 3.500 3 8 0 11.500" strokeWidth={1.200} />
      </Ic>
      <span className="ml-px w-[36px] text-[12px] leading-[30px] tracking-[-0.5px] text-white">ENG</span>
      <span className="w-[62px] text-[12px] leading-[30px] tracking-[-0.4px] whitespace-nowrap text-white">11:38 AM</span>
      <Ic x={1320} y={738} w={46} h={30}>
        <path d="M1325 745h16v13h-5l-3 3-3-3h-5z" fill="#fff" stroke="none" />
        <path d="M1328 748.500h10M1328 751.500h10M1328 754.500h7" stroke="#252932" strokeWidth={1} />
        <path d="M1361.500 738v30" stroke="#6d7076" strokeWidth={1} />
      </Ic>
    </div>
  );
}

export default function App() {
  return (
    <div className="flex h-[768px] w-[1366px] flex-col overflow-hidden bg-[#f4f4f4] font-['Noto_Sans','Open_Sans',sans-serif]">
      <TitleBar />
      <MenuBar />
      <Toolbar />
      <div className="flex h-[603px] shrink-0">
        <DataPane />
        <Shelves />
        <Workspace />
      </div>
      <SheetTabs />
      <StatusBar />
      <Taskbar />
    </div>
  );
}
